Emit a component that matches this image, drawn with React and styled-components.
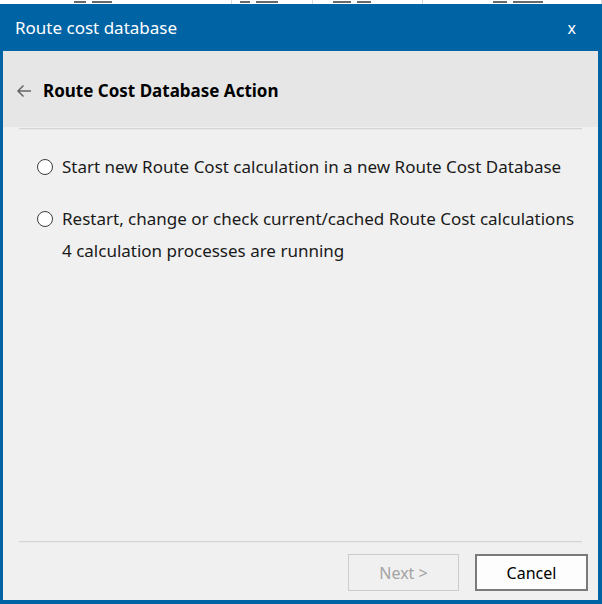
import styled, { createGlobalStyle } from "styled-components";

const GlobalStyle = createGlobalStyle`
  html, body {
    margin: 0;
    padding: 0;
    background: #ffffff;
  }
  body {
    font-family: "Noto Sans", "Open Sans", sans-serif;
  }
`;

const Page = styled.div`
  width: 602px;
  height: 604px;
  display: flex;
  flex-direction: column;
  overflow: hidden;
`;

const BackStrip = styled.div`
  height: 4px;
  display: flex;
  overflow: hidden;
  background: #fff;
`;

const BackCell = styled.div`
  width: ${(p) => p.$w}px;
  height: 4px;
  display: flex;
  gap: 6px;
  padding-left: ${(p) => p.$pad}px;
  box-sizing: border-box;
  border-right: 1px solid #d8d8d8;
`;

// bits of the app that lies behind the dialog
const Smudge = styled.span`
  width: ${(p) => p.$w}px;
  height: 2px;
  margin-top: 1px;
  background: #6a6a6a;
`;

const Window = styled.div`
  flex: 1;
  display: flex;
  flex-direction: column;
  background: #0063a4;
  padding: 0 4px 4px 3px;
`;

const TitleBar = styled.div`
  height: 47px;
  display: flex;
  align-items: center;
  justify-content: space-between;
  padding: 0 22px 0 12px;
  color: #fff;
  font-size: 17px;
`;

const Close = styled.span`
  font-size: 16px;
`;

const Body = styled.div`
  flex: 1;
  display: flex;
  flex-direction: column;
  background: #f0f0f0;
`;

const Header = styled.div`
  height: 76px;
  display: flex;
  align-items: center;
  gap: 11px;
  padding: 3px 0 0 13px;
  box-sizing: border-box;
  background: #e6e6e6;
  font-size: 17px;
  font-weight: 700;
  color: #000;
`;

const Divider = styled.div`
  height: 2px;
  margin: ${(p) => p.$top}px 16px 0 16px;
  background: #d5d5d5;
  border-bottom: 1px solid #e8e8e8;
  box-sizing: border-box;
`;

const Options = styled.div`
  flex: 1;
  display: flex;
  flex-direction: column;
  gap: 20px;
  padding: 21px 0 0 34px;
`;

const Option = styled.label`
  display: flex;
  gap: 9px;
  font-size: 17px;
  line-height: 32px;
  color: #1a1a1a;
`;

const Radio = styled.span`
  flex: none;
  width: 16px;
  height: 16px;
  margin-top: 8px;
  border: 1px solid #3c3c3c;
  border-radius: 50%;
  background: #fff;
  box-sizing: border-box;
`;

const Footer = styled.div`
  height: 57px;
  display: flex;
  justify-content: flex-end;
  align-items: flex-start;
  gap: 16px;
  padding: 11px 10px 0 0;
  box-sizing: border-box;
`;

const Button = styled.button`
  width: ${(p) => (p.$primary ? 113 : 111)}px;
  height: 37px;
  font-family: inherit;
  font-size: 16px;
  padding: 0;
  box-sizing: border-box;
  color: ${(p) => (p.disabled ? "#a3a3a3" : "#000")};
  background: ${(p) => (p.disabled ? "#f0f0f0" : "#fdfdfd")};
  border: ${(p) => (p.disabled ? "1px solid #cccccc" : "2px solid #7a7a7a")};
`;

function BackArrow() {
  return (
    <svg width="16" height="14" viewBox="0 0 16 14">
      <path
        d="M15 7H2M7.5 1.5L2 7l5.5 5.5"
        fill="none"
        stroke="#666"
        strokeWidth="1.5"
      />
    </svg>
  );
}

export default function App() {
  return (
    <Page>
      <GlobalStyle />
      <BackStrip>
        <BackCell $w={232} $pad={74}>
          <Smudge $w={12} />
          <Smudge $w={20} />
        </BackCell>
        <BackCell $w={81} $pad={8}>
          <Smudge $w={10} />
          <Smudge $w={22} />
        </BackCell>
        <BackCell $w={110} $pad={20}>
          <Smudge $w={18} />
          <Smudge $w={14} />
        </BackCell>
        <BackCell $w={179} $pad={70}>
          <Smudge $w={14} />
          <Smudge $w={30} />
        </BackCell>
      </BackStrip>
      <Window>
        <TitleBar>
          <span>Route cost database</span>
          <Close>x</Close>
        </TitleBar>
        <Body>
          <Header>
            <BackArrow />
            <span>Route Cost Database Action</span>
          </Header>
          <Divider $top={1} />
          <Options>
            <Option>
              <Radio />
              <span>Start new Route Cost calculation in a new Route Cost Database</span>
            </Option>
            <Option>
              <Radio />
              <span>
                Restart, change or check current/cached Route Cost calculations
                <br />4 calculation processes are running
              </span>
            </Option>
          </Options>
          <Divider $top={0} />
          <Footer>
            <Button disabled>Next &gt;</Button>
            <Button $primary>Cancel</Button>
          </Footer>
        </Body>
      </Window>
    </Page>
  );
}
